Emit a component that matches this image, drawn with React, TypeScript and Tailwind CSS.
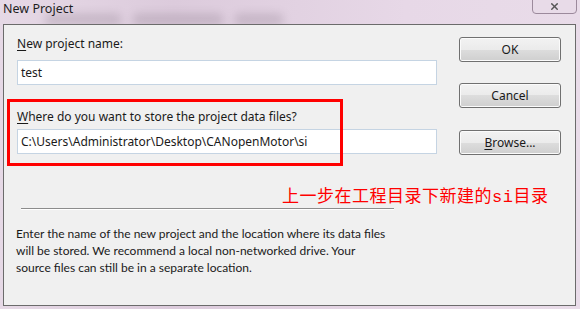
import { X } from "lucide-react";

const ui = "font-['Noto_Sans','Liberation_Sans',sans-serif] text-[12px] leading-[16px] text-[#1a1a1a]";

const WinButton = ({ children, className = "" }: { children: React.ReactNode; className?: string }) => {
  return (
    <div
      className={`flex h-[25px] w-[102px] items-center justify-center rounded-[3px] border border-[#707070] bg-[linear-gradient(to_bottom,#f2f2f2_0%,#ebebeb_50%,#dddddd_50%,#cfcfcf_100%)] shadow-[inset_0_0_0_1px_#fbfbfb] ${className}`}
    >
      {children}
    </div>
  );
};

const TextInput = ({ value }: { value: string }) => {
  return (
    <div className="flex h-[25px] w-[420px] items-center border border-[#c5d4e3] bg-white px-[3px]">
      <span>{value}</span>
    </div>
  );
};

export default function App() {
  return (
    <div className={`relative h-[309px] w-[580px] overflow-hidden bg-[linear-gradient(to_right,#e6d9e6,#dccbdc_30%,#e7d8e7_70%,#e9dce9)] ${ui}`}>
      {/* glass: blurred shapes of the window behind */}
      <div className="pointer-events-none absolute left-[44px] top-[13px] flex gap-[10px] opacity-20 blur-[4px]">
        <div className="h-[13px] w-[78px] rounded-full bg-[#6a5a6a]" />
        <div className="h-[13px] w-[92px] rounded-full bg-[#6a5a6a]" />
        <div className="h-[13px] w-[50px] rounded-full bg-[#6a5a6a]" />
      </div>

      {/* title bar */}
      <div className="relative flex h-[24px] items-start pl-[3px] pt-[1px]">
        <span className="text-[12.5px] leading-[16px] text-[#1e1e1e]">New Project</span>
      </div>

      {/* close button */}
      <div className="absolute right-[3px] top-[-1px] flex h-[15px] w-[45px] items-center justify-center rounded-b-[4px] border border-[#9c8a9c] bg-[#e8dbe8]">
        <X className="size-[11px] text-[#555]" strokeWidth={3} />
      </div>

      {/* client area */}
      <div className="relative ml-[3px] h-[282px] w-[573px] border border-[#6b6b6b] bg-[#f0f0f0]">
        <div className="flex pl-[13px] pt-[11px]">
          <div className="flex w-[420px] flex-col">
            <div>
              <span className="underline underline-offset-2">N</span>ew project name:
            </div>
            <div className="mt-[8px]">
              <TextInput value="test" />
            </div>
            <div className="mt-[24px]">
              <span className="underline underline-offset-2">W</span>here do you want to store the project data files?
            </div>
            <div className="mt-[4px]">
              <TextInput value="C:\Users\Administrator\Desktop\CANopenMotor\si" />
            </div>
          </div>
          <div className="ml-[22px] flex flex-col pt-[1px]">
            <WinButton>OK</WinButton>
            <WinButton className="mt-[21px]">Cancel</WinButton>
            <WinButton className="mt-[22px]">
              <span>
                <span className="underline underline-offset-2">B</span>rowse...
              </span>
            </WinButton>
          </div>
        </div>

        <div className="mt-[30px] pl-[278px] font-['Noto_Sans_CJK_SC',sans-serif] text-[17px] leading-[20px] tracking-[0.5px] text-[#ff0000]">
          上一步在工程目录下新建的<span className="font-['Liberation_Mono',monospace]">si</span>目录
        </div>

        <div className="ml-[17px] mt-[0px] h-[2px] w-[373px] border-t border-b border-t-[#8c8c8c] border-b-white" />

        <div className="mt-[15px] pl-[12px] font-['Lato',sans-serif] text-[12px] leading-[17px]">
          Enter the name of the new project and the location where its data files
          <br />
          will be stored. We recommend a local non-networked drive. Your
          <br />
          source files can still be in a separate location.
        </div>
      </div>

      {/* annotation */}
      <div className="absolute left-[7px] top-[99px] h-[67px] w-[336px] border-[3px] border-[#ff0000]" />
    </div>
  );
}
